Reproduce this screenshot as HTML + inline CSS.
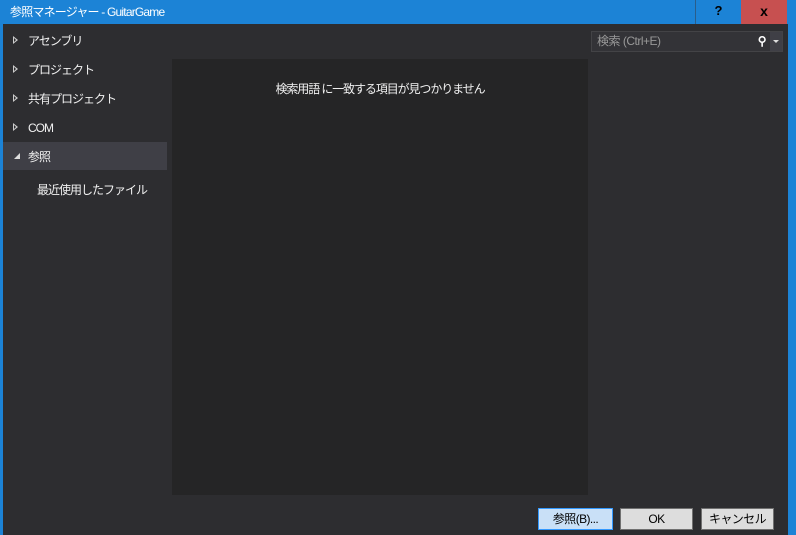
<!DOCTYPE html>
<html><head><meta charset="utf-8"><style>
*{margin:0;padding:0;box-sizing:border-box}
body{width:796px;height:535px;background:#1c83d6;font-family:"Liberation Sans","Noto Sans CJK JP",sans-serif;font-size:12px;position:relative;overflow:hidden}
.title{position:absolute;left:10px;top:3px;color:#fff;font-size:12px;letter-spacing:-0.8px}
.help{position:absolute;left:695px;top:0;width:46px;height:24px;background:#1c83d6;border-left:1px solid #2a5d8a;color:#000;font-weight:bold;text-align:center;line-height:22px;font-size:13px}
.close{position:absolute;left:741px;top:0;width:46px;height:24px;background:#c75050;color:#000;font-weight:bold;text-align:center;line-height:22px;font-size:14px}
.main{position:absolute;left:3px;top:24px;width:785px;height:511px;background:#2d2d30}
.center{position:absolute;left:169px;top:35px;width:416px;height:436px;background:#252526;color:#f1f1f1;text-align:center;padding-top:21px;letter-spacing:-1.1px}
.item{position:absolute;left:0;width:164px;height:28px;color:#f1f1f1;line-height:30px;padding-left:25px;letter-spacing:-1px}
.item .tri{position:absolute;left:10px;top:10px;width:0;height:0;border-left:5px solid #ccc;border-top:4px solid transparent;border-bottom:4px solid transparent}
.item .tri:after{content:"";position:absolute;left:-4px;top:-2px;border-left:2px solid #2d2d30;border-top:2px solid transparent;border-bottom:2px solid transparent}
.sel{background:#3f3f46}
.search{position:absolute;left:588px;top:7px;width:192px;height:21px;background:#333337;border:1px solid #434346;color:#999;padding-left:5px;line-height:19px;letter-spacing:-0.5px}
.search .dd{position:absolute;right:0;top:0;width:12px;height:19px;background:#3f3f46}
.btn{position:absolute;top:484px;height:22px;text-align:center;line-height:20px;color:#000;font-size:12px;letter-spacing:-0.6px}
</style></head><body>
<div class="title">参照マネージャー - GuitarGame</div>
<div class="help">?</div><div class="close">x</div>
<div class="main">
 <div class="item" style="top:2px"><span class="tri"></span>アセンブリ</div>
 <div class="item" style="top:31px"><span class="tri"></span>プロジェクト</div>
 <div class="item" style="top:60px"><span class="tri"></span>共有プロジェクト</div>
 <div class="item" style="top:89px"><span class="tri"></span>COM</div>
 <div class="item sel" style="top:118px"><span style="position:absolute;left:11px;top:11px;width:0;height:0;border-right:6px solid #ddd;border-top:6px solid transparent"></span>参照</div>
 <div class="item" style="top:151px;padding-left:34px">最近使用したファイル</div>
 <div class="center">検索用語 に一致する項目が見つかりません</div>
 <div class="search">検索 (Ctrl+E)<span style="position:absolute;right:16px;top:0;color:#fff;font-weight:bold">⚲</span><span class="dd"><span style="position:absolute;left:3px;top:8px;border-top:3px solid #ddd;border-left:3px solid transparent;border-right:3px solid transparent"></span></span></div>
 <div class="btn" style="left:535px;width:75px;background:#c9e0f7;border:1px solid #3399ff">参照(B)...</div>
 <div class="btn" style="left:617px;width:73px;background:#dddddd;border:1px solid #707070">OK</div>
 <div class="btn" style="left:698px;width:73px;background:#dddddd;border:1px solid #707070">キャンセル</div>
</div>
</body></html>
